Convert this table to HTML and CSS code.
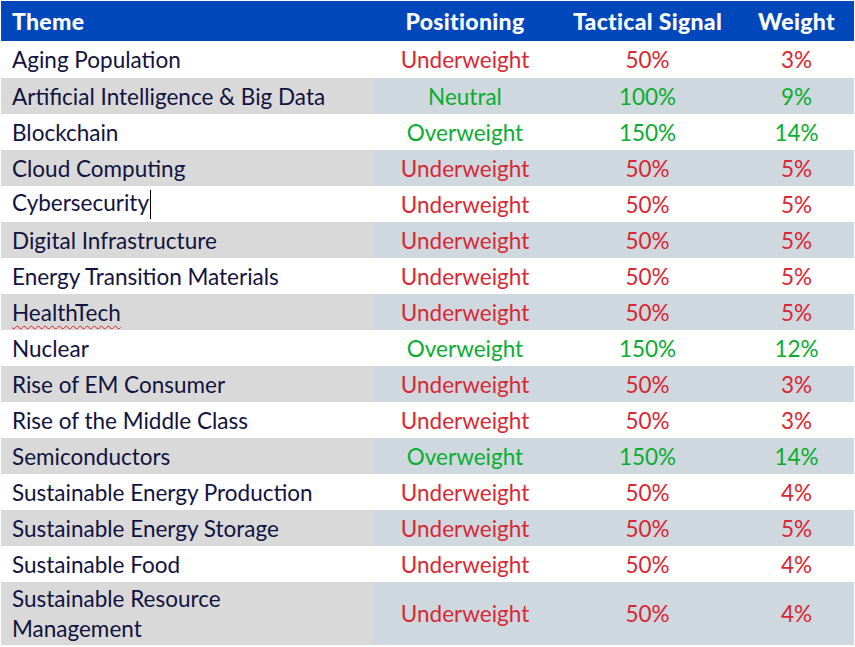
FILE: index.html
```html
<!DOCTYPE html>
<html>
<head>
<meta charset="utf-8">
<link rel="stylesheet" href="styles.css">
</head>
<body>
<div class="wrap">
<table class="grid">
  <colgroup>
    <col class="c1"><col class="c2"><col class="c3"><col class="c4">
  </colgroup>
  <thead>
    <tr class="head">
      <th class="theme">Theme</th>
      <th>Positioning</th>
      <th>Tactical Signal</th>
      <th>Weight</th>
    </tr>
  </thead>
  <tbody>
    <tr class="first"><td class="theme">Aging Population</td><td class="neg">Underweight</td><td class="neg">50%</td><td class="neg">3%</td></tr>
    <tr class="alt"><td class="theme">Artificial Intelligence &amp; Big Data</td><td class="pos">Neutral</td><td class="pos">100%</td><td class="pos">9%</td></tr>
    <tr><td class="theme">Blockchain</td><td class="pos">Overweight</td><td class="pos">150%</td><td class="pos">14%</td></tr>
    <tr class="alt"><td class="theme">Cloud Computing</td><td class="neg">Underweight</td><td class="neg">50%</td><td class="neg">5%</td></tr>
    <tr><td class="theme">Cybersecurity<span class="caret"></span></td><td class="neg">Underweight</td><td class="neg">50%</td><td class="neg">5%</td></tr>
    <tr class="alt"><td class="theme">Digital Infrastructure</td><td class="neg">Underweight</td><td class="neg">50%</td><td class="neg">5%</td></tr>
    <tr><td class="theme">Energy Transition Materials</td><td class="neg">Underweight</td><td class="neg">50%</td><td class="neg">5%</td></tr>
    <tr class="alt"><td class="theme"><span class="spell">HealthTech</span></td><td class="neg">Underweight</td><td class="neg">50%</td><td class="neg">5%</td></tr>
    <tr><td class="theme">Nuclear</td><td class="pos">Overweight</td><td class="pos">150%</td><td class="pos">12%</td></tr>
    <tr class="alt"><td class="theme">Rise of EM Consumer</td><td class="neg">Underweight</td><td class="neg">50%</td><td class="neg">3%</td></tr>
    <tr><td class="theme">Rise of the Middle Class</td><td class="neg">Underweight</td><td class="neg">50%</td><td class="neg">3%</td></tr>
    <tr class="alt"><td class="theme">Semiconductors</td><td class="pos">Overweight</td><td class="pos">150%</td><td class="pos">14%</td></tr>
    <tr><td class="theme">Sustainable Energy Production</td><td class="neg">Underweight</td><td class="neg">50%</td><td class="neg">4%</td></tr>
    <tr class="alt"><td class="theme">Sustainable Energy Storage</td><td class="neg">Underweight</td><td class="neg">50%</td><td class="neg">5%</td></tr>
    <tr><td class="theme">Sustainable Food</td><td class="neg">Underweight</td><td class="neg">50%</td><td class="neg">4%</td></tr>
    <tr class="alt last"><td class="theme">Sustainable Resource<br>Management</td><td class="neg">Underweight</td><td class="neg">50%</td><td class="neg">4%</td></tr>
  </tbody>
</table>
</div>
</body>
</html>
```

FILE: styles.css
```css
html, body {
  margin: 0;
  padding: 0;
  background: #ffffff;
}
.wrap {
  padding: 1px 1px 0 1px;
}
.grid {
  border-collapse: collapse;
  table-layout: fixed;
  width: 853px;
  font-family: "Lato", "Open Sans", sans-serif;
  font-size: 22.5px;
  color: #12123f;
}
.c1 { width: 373px; }
.c2 { width: 182px; }
.c3 { width: 183px; }
.c4 { width: 115px; }
.grid th, .grid td {
  padding: 0;
  text-align: center;
  vertical-align: middle;
  white-space: nowrap;
}
.grid .theme {
  text-align: left;
  padding-left: 11px;
}
.head {
  background: #0047bb;
  color: #ffffff;
  height: 40px;
}
.head th {
  font-weight: 900;
  font-size: 23px;
  letter-spacing: 0.3px;
}
tbody tr { height: 36px; }
tbody tr.first { height: 37px; }
tbody tr.last { height: 63px; }
tbody tr.last td.theme { line-height: 30px; white-space: normal; }
tr.alt td { background: #cfd8df; }
tr.alt td.theme { background: #d9d9d9; }
.neg { color: #d92733; }
.pos { color: #0aac2e; }
.caret {
  display: inline-block;
  width: 0;
  height: 29px;
  border-left: 1px solid #000000;
  vertical-align: middle;
  margin-left: 1px;
}
.spell {
  text-decoration: underline wavy #e02020;
  text-decoration-thickness: 1px;
  text-underline-offset: 4px;
}
```
